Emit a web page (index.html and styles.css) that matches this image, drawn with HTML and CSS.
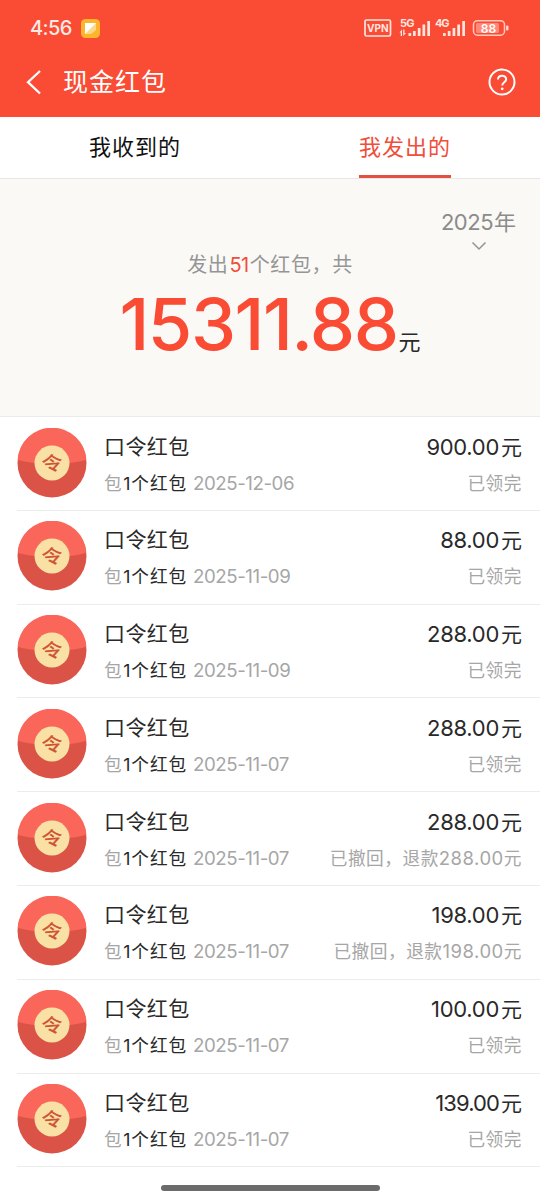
FILE: index.html
```html
<!DOCTYPE html>
<html lang="zh-CN">
<head>
<meta charset="utf-8">
<title>现金红包</title>
<link rel="stylesheet" href="styles.css">
</head>
<body>
<svg class="defs" width="0" height="0" aria-hidden="true">
  <symbol id="packet" viewBox="0 0 70 70">
    <circle cx="35" cy="35" r="34.500" fill="#da5346"/>
    <path d="M.6 31.500A34.500 34.500 0 0 1 69.400 31.500C60 35 50 35.500 35 35.500S10 35 .6 31.500Z" fill="#fa665a"/>
    <circle cx="35" cy="35" r="17.500" fill="#f9e0a5"/>
  </symbol>
</svg>
<div class="screen">
  <header class="top">
    <div class="status">
      <span class="clock">4:56</span>
      <svg class="note" width="19" height="19" viewBox="0 0 19 19"><rect width="19" height="19" rx="4.500" fill="#fdb52c"/><path d="M4 4h11v7l-5 4H4z" fill="#fcd98a"/><path d="M4 4h11L4 15z" fill="#fff"/></svg>
      <svg class="signals" width="148" height="28" viewBox="0 -4 148 28">
        <rect x="1" y="2" width="25.500" height="16" rx="1.500" fill="none" stroke="#ffe5df" stroke-width="1.700"/>
        <text x="13.800" y="13.600" class="vpn" text-anchor="middle">VPN</text>
        <text x="36" y="8.800" class="net" textLength="14.500">5G</text>
        <text x="71" y="8.800" class="net" textLength="14.500">4G</text>
        <g fill="#ffe5df">
          <path d="M35.500 14.500 38 11.500v6.500h-1.300v-3.500zM39.200 11.500h1.300v3.500H42L39.200 18z"/>
          <rect x="44.500" y="15" width="2.700" height="3"/><rect x="49" y="13" width="2.700" height="5"/><rect x="53.800" y="10" width="2.700" height="8"/><rect x="58.500" y="6.500" width="2.700" height="11.500"/><rect x="63.300" y="3" width="2.700" height="15"/>
          <rect x="79" y="15" width="2.700" height="3"/><rect x="83.800" y="13" width="2.700" height="5"/><rect x="88.600" y="10" width="2.700" height="8"/><rect x="93.300" y="6.500" width="2.700" height="11.500"/><rect x="98.300" y="3" width="2.700" height="15"/>
        </g>
        <rect x="109.500" y="2.700" width="31" height="14.500" rx="4" fill="none" stroke="#ffc9bd" stroke-width="1.500"/>
        <rect x="112" y="5" width="23" height="10" rx="1.500" fill="#ff8977"/>
        <rect x="142" y="7.500" width="2.500" height="5" rx="1" fill="#ffd2c9"/>
        <text x="124.500" y="14.500" class="battery" text-anchor="middle">88</text>
      </svg>
    </div>
    <div class="nav">
      <svg class="back" width="18" height="26" viewBox="0 0 18 26"><path d="M16 2 4 13.200 16 24.500" fill="none" stroke="#fff" stroke-width="2.300"/></svg>
      <h1 class="nav-title">现金红包</h1>
      <svg class="help" width="28" height="28" viewBox="0 0 28 28" fill="none" stroke="#fff" stroke-width="2"><circle cx="14" cy="14" r="12.500"/><path d="M10 11.600c0-5.200 8.200-5 8.200-.3 0 3.100-4 2.900-4 6.200"/><circle cx="14.200" cy="20.800" r="1.400" fill="#fff" stroke="none"/></svg>
    </div>
  </header>
  <nav class="tabs">
    <div class="tab"><span class="tab-label">我收到的</span></div>
    <div class="tab"><span class="tab-label active">我发出的</span></div>
  </nav>
  <section class="summary">
    <div class="year"><div class="year-label"><span class="year-num">2025</span>年</div><svg width="16" height="10" viewBox="0 0 16 10"><path d="m1.500 1.500 6.500 6.500 6.500-6.500" fill="none" stroke="#949494" stroke-width="1.500"/></svg></div>
    <p class="count">发出<span class="count-num">51</span>个红包，共</p>
    <p class="total"><span class="total-num">15311.88</span><span class="unit">元</span></p>
  </section>
  <main class="list">
    <article class="row"><div class="icon"><svg width="70" height="70"><use href="#packet"/></svg><span class="icon-char">令</span></div><div class="info"><div class="line"><span class="name">口令红包</span><span class="amount"><span class="num">900.00</span>元</span></div><div class="line sub"><span>包<b>1个红包</b><span class="date">2025-12-06</span></span><span>已领完</span></div></div></article>
    <article class="row"><div class="icon"><svg width="70" height="70"><use href="#packet"/></svg><span class="icon-char">令</span></div><div class="info"><div class="line"><span class="name">口令红包</span><span class="amount"><span class="num">88.00</span>元</span></div><div class="line sub"><span>包<b>1个红包</b><span class="date">2025-11-09</span></span><span>已领完</span></div></div></article>
    <article class="row"><div class="icon"><svg width="70" height="70"><use href="#packet"/></svg><span class="icon-char">令</span></div><div class="info"><div class="line"><span class="name">口令红包</span><span class="amount"><span class="num">288.00</span>元</span></div><div class="line sub"><span>包<b>1个红包</b><span class="date">2025-11-09</span></span><span>已领完</span></div></div></article>
    <article class="row"><div class="icon"><svg width="70" height="70"><use href="#packet"/></svg><span class="icon-char">令</span></div><div class="info"><div class="line"><span class="name">口令红包</span><span class="amount"><span class="num">288.00</span>元</span></div><div class="line sub"><span>包<b>1个红包</b><span class="date">2025-11-07</span></span><span>已领完</span></div></div></article>
    <article class="row"><div class="icon"><svg width="70" height="70"><use href="#packet"/></svg><span class="icon-char">令</span></div><div class="info"><div class="line"><span class="name">口令红包</span><span class="amount"><span class="num">288.00</span>元</span></div><div class="line sub"><span>包<b>1个红包</b><span class="date">2025-11-07</span></span><span>已撤回，退款<span class="refund">288.00</span>元</span></div></div></article>
    <article class="row"><div class="icon"><svg width="70" height="70"><use href="#packet"/></svg><span class="icon-char">令</span></div><div class="info"><div class="line"><span class="name">口令红包</span><span class="amount"><span class="num">198.00</span>元</span></div><div class="line sub"><span>包<b>1个红包</b><span class="date">2025-11-07</span></span><span>已撤回，退款<span class="refund">198.00</span>元</span></div></div></article>
    <article class="row"><div class="icon"><svg width="70" height="70"><use href="#packet"/></svg><span class="icon-char">令</span></div><div class="info"><div class="line"><span class="name">口令红包</span><span class="amount"><span class="num">100.00</span>元</span></div><div class="line sub"><span>包<b>1个红包</b><span class="date">2025-11-07</span></span><span>已领完</span></div></div></article>
    <article class="row"><div class="icon"><svg width="70" height="70"><use href="#packet"/></svg><span class="icon-char">令</span></div><div class="info"><div class="line"><span class="name">口令红包</span><span class="amount"><span class="num tight">139.00</span>元</span></div><div class="line sub"><span>包<b>1个红包</b><span class="date">2025-11-07</span></span><span>已领完</span></div></div></article>
  </main>
  <footer class="home"><div class="home-bar"></div></footer>
</div>
</body>
</html>
```
FILE: styles.css
```css
* { box-sizing: border-box; }
body, h1, p { margin: 0; }
body { font-family: Inter, "Noto Sans CJK SC", sans-serif; background: #fff; color: #292929; }
svg { display: block; flex: none; }
.defs { position: absolute; }
.screen { width: 540px; height: 1200px; display: flex; flex-direction: column; overflow: hidden; }

.top { height: 117px; background: #fa4b34; color: #fff; flex: none; }
.status { height: 56px; padding: 0 23px 0 30px; display: flex; align-items: center; }
.clock { font-size: 20px; line-height: 24px; font-weight: 500; color: #ffeae5; width: 51px; letter-spacing: -.6px; }
.signals { margin-left: auto; margin-right: 5px; }
.vpn { font-size: 10px; font-weight: 700; fill: #ffe5df; }
.net { font-size: 11px; font-weight: 700; fill: #ffe5df; }
.battery { font-size: 12px; font-weight: 600; fill: #fff; }
.nav { height: 52px; padding: 0 24px; display: flex; align-items: center; }
.nav-title { margin-left: 21px; font-size: 25px; line-height: 36px; font-weight: 400; letter-spacing: 1px; }
.help { margin-left: auto; }

.tabs { height: 62px; flex: none; display: grid; grid-template-columns: 1fr 1fr; border-bottom: 1px solid #e7e7e7; }
.tab { display: flex; justify-content: center; }
.tab-label { width: 92px; height: 61px; font-size: 22px; line-height: 61px; letter-spacing: 1px; color: #111; white-space: nowrap; }
.active { color: #f04e3a; border-bottom: 3px solid #e2503f; }

.summary { height: 238px; flex: none; background: #faf9f6; border-bottom: 1px solid #ebebeb; display: flex; flex-direction: column; }
.year { align-self: flex-end; width: 75px; margin: 28px 24px 0 0; height: 45px; color: #8b8b8b; display: flex; flex-direction: column; align-items: center; }
.year-label { font-size: 22px; line-height: 30px; height: 34px; white-space: nowrap; }
.year-num { letter-spacing: -.5px; margin-right: 1px; }
.count { text-align: center; font-size: 20px; line-height: 26px; letter-spacing: .6px; color: #959595; }
.count-num { color: #f04e3a; letter-spacing: -.5px; margin: 0 1px; }
.total { display: flex; justify-content: center; align-items: baseline; line-height: 91px; color: #fa4b34; }
.total-num { font-size: 72px; font-weight: 500; letter-spacing: -1.500px; }
.unit { font-size: 22px; color: #292929; margin-left: 1px; }

.list { padding-left: 17px; flex: none; }
.row { height: 93.800px; border-bottom: 1px solid #ececec; display: flex; padding: 10.500px 18px 0 0; }
.icon { width: 70px; height: 70px; margin-right: 17px; position: relative; flex: none; }
.icon-char { position: absolute; inset: 0; text-align: center; font-size: 21px; line-height: 71px; font-weight: 500; color: #cf5436; transform: rotate(-5deg) scaleY(.92); }
.info { flex: 1; }
.line { display: flex; justify-content: space-between; font-size: 21px; line-height: 38px; height: 38px; white-space: nowrap; }
.name { letter-spacing: .4px; }
.amount { font-size: 21px; }
.num { font-size: 22px; margin-right: 2px; letter-spacing: -.3px; }
.tight { letter-spacing: -.9px; }
.sub { font-size: 17.700px; line-height: 35px; height: 34px; color: #a6a6a6; letter-spacing: .5px; }
.sub b { color: #292929; font-weight: 400; margin-left: 1px; letter-spacing: .9px; }
.date { margin-left: 6px; font-size: 18.700px; letter-spacing: -.45px; }
.refund { font-size: 18.500px; }

.home { flex: 1; display: flex; justify-content: center; padding-top: 18px; }
.home-bar { width: 219px; height: 6px; border-radius: 3px; background: #6b6b6b; }
```
